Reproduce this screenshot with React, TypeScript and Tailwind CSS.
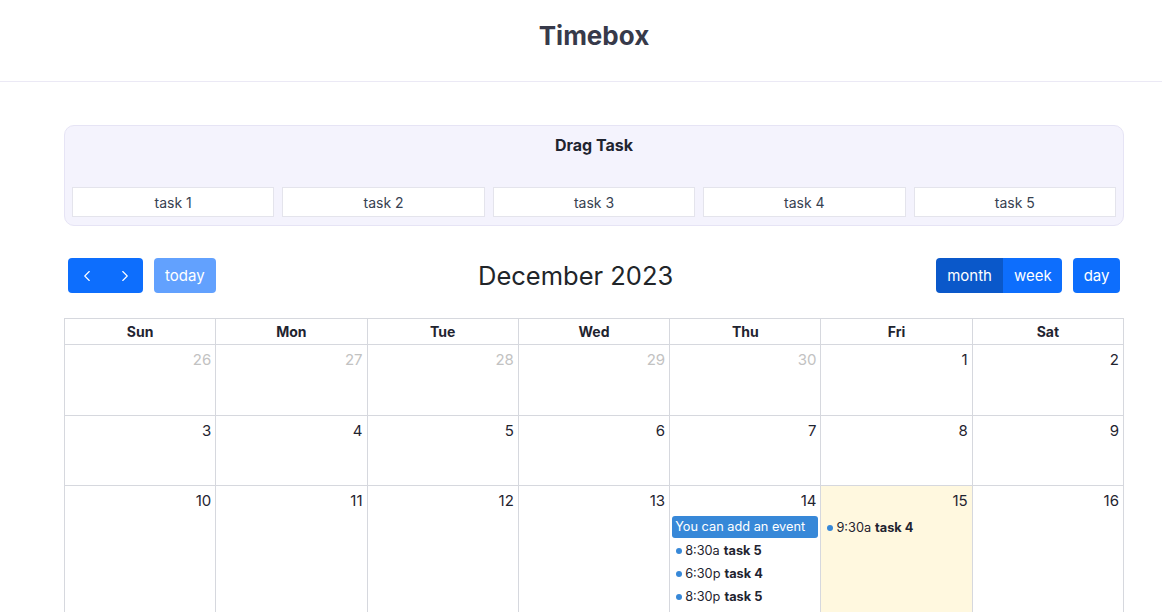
import { ChevronLeft, ChevronRight } from "lucide-react";

const tasks = ["task 1", "task 2", "task 3", "task 4", "task 5"];
const weekDays = ["Sun", "Mon", "Tue", "Wed", "Thu", "Fri", "Sat"];

type Ev = { time?: string; title: string; block?: boolean };

const events: Record<string, Ev[]> = {
  "2023-12-14": [
    { title: "You can add an event", block: true },
    { time: "8:30a", title: "task 5" },
    { time: "6:30p", title: "task 4" },
    { time: "8:30p", title: "task 5" },
  ],
  "2023-12-15": [{ time: "9:30a", title: "task 4" }],
};

function buildDays() {
  const days: { day: number; key: string; other: boolean }[] = [];
  for (let d = 26; d <= 30; d++) days.push({ day: d, key: `2023-11-${d}`, other: true });
  for (let d = 1; d <= 31; d++) days.push({ day: d, key: `2023-12-${String(d).padStart(2, "0")}`, other: false });
  for (let d = 1; d <= 6; d++) days.push({ day: d, key: `2024-01-0${d}`, other: true });
  return days;
}

function DayCell({ day, k, other }: { day: number; k: string; other: boolean }) {
  const list = events[k] || [];
  const today = k === "2023-12-15";
  return (
    <div className={`border-r border-b border-[#d6d8de] min-h-[70.5px] flex flex-col ${today ? "bg-[#fff8df]" : ""}`}>
      <div className={`text-right pr-[4px] pt-[4px] h-[26px] leading-[22px] ${other ? "text-[#c2c2c2]" : "text-[#1f2430]"}`}>
        {day}
      </div>
      <div className="flex flex-col px-[2px] mt-[4px] pb-[8px]">
        {list.map((e, i) =>
          e.block ? (
            <div key={i} className="h-[22px] mb-[1px] rounded-[3px] bg-[#3788d8] text-white text-[12.75px] leading-[22px] px-[3px] truncate">
              {e.title}
            </div>
          ) : (
            <div key={i} className="h-[23px] flex items-center text-[12.75px] text-[#1f2430]">
              <span className="w-[6px] h-[6px] rounded-full bg-[#3788d8] ml-[4px] mr-[3px] shrink-0" />
              <span>{e.time}</span>
              <span className="font-bold ml-[4px]">{e.title}</span>
            </div>
          )
        )}
      </div>
    </div>
  );
}

export default function App() {
  const days = buildDays();
  return (
    <div className="min-h-screen bg-white text-[15px]" style={{ fontFamily: "Inter, 'Noto Sans', sans-serif" }}>
      <header className="h-[82px] border-b border-[#ebe9f5] flex items-center justify-center pl-[64px] pr-[38px]">
        <h1 className="text-[26px] font-bold text-[#373a4a] -mt-[10px]">Timebox</h1>
      </header>

      <main className="pl-[64px] pr-[38px] pt-[43px] pb-10">
        <section className="rounded-[10px] border border-[#e6e4f5] bg-[#f4f3fd] px-[7px] pt-[8px] pb-[8px]">
          <h2 className="text-center text-[16px] font-bold text-[#1f2430] leading-[22px]">Drag Task</h2>
          <div className="grid grid-cols-5 gap-[8px] mt-[31px]">
            {tasks.map((t) => (
              <div key={t} className="h-[30px] bg-white border border-[#e4e4ec] flex items-center justify-center text-[14px] text-[#374151]">
                {t}
              </div>
            ))}
          </div>
        </section>

        <div className="flex items-center justify-between mt-[32px] mx-[4px] h-[35px]">
          <div className="flex items-center gap-[11px]">
            <div className="flex h-[35px] rounded-[4px] overflow-hidden bg-[#0d6efd] text-white">
              <button className="w-[38px] flex items-center justify-center">
                <ChevronLeft size={18} strokeWidth={1.5} />
              </button>
              <button className="w-[37px] flex items-center justify-center">
                <ChevronRight size={18} strokeWidth={1.5} />
              </button>
            </div>
            <button className="h-[35px] px-[11px] pt-[2px] rounded-[4px] bg-[#62a1fe] text-white">today</button>
          </div>
          <h2 className="text-[25.5px] text-[#212529] pt-[2px]">December 2023</h2>
          <div className="flex items-center gap-[11px]">
            <div className="flex h-[35px] rounded-[4px] overflow-hidden text-white">
              <button className="px-[11.5px] pt-[2px] bg-[#0a58ca]">month</button>
              <button className="px-[10.5px] pt-[2px] bg-[#0d6efd]">week</button>
            </div>
            <button className="h-[35px] px-[10.5px] pt-[2px] rounded-[4px] bg-[#0d6efd] text-white">day</button>
          </div>
        </div>

        <div className="mt-[25px] border-l border-t border-[#d6d8de] grid grid-cols-7">
          {weekDays.map((d) => (
            <div key={d} className="h-[26px] border-r border-b border-[#d6d8de] flex items-center justify-center font-bold text-[14px] text-[#1f2430]">
              {d}
            </div>
          ))}
          {days.map((d) => (
            <DayCell key={d.key} day={d.day} k={d.key} other={d.other} />
          ))}
        </div>
      </main>
    </div>
  );
}
